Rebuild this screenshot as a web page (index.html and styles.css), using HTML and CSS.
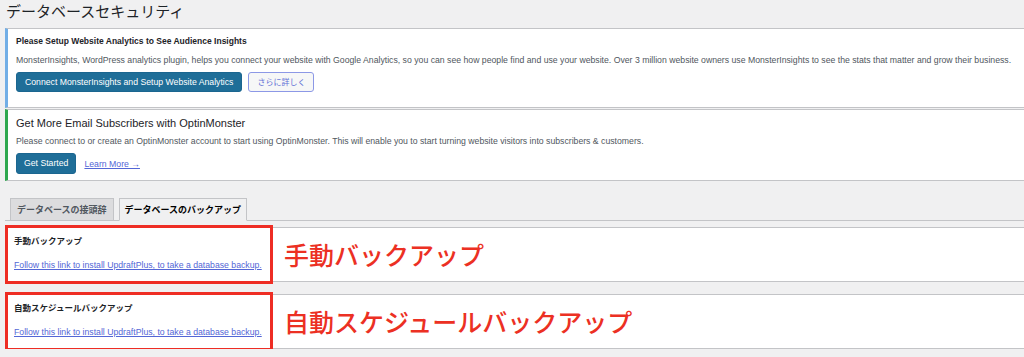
FILE: index.html
```html
<!DOCTYPE html>
<html>
<head lang="ja">
    <meta charset="UTF-8">
    <title>データベースセキュリティ</title>
    <link rel="stylesheet" href="styles.css">
</head>
<body>
<div class="wrap">
    <h1 class="page-title">データベースセキュリティ</h1>

    <div class="notice notice-info">
        <p class="notice-title">Please Setup Website Analytics to See Audience Insights</p>
        <p class="notice-text">MonsterInsights, WordPress analytics plugin, helps you connect your website with Google Analytics, so you can see how people find and use your website. Over 3 million website owners use MonsterInsights to see the stats that matter and grow their business.</p>
        <div class="notice-actions">
            <a class="btn btn-primary" href="#">Connect MonsterInsights and Setup Website Analytics</a>
            <a class="btn btn-secondary" href="#">さらに詳しく</a>
        </div>
    </div>

    <div class="notice notice-success">
        <p class="notice-heading">Get More Email Subscribers with OptinMonster</p>
        <p class="notice-text">Please connect to or create an OptinMonster account to start using OptinMonster. This will enable you to start turning website visitors into subscribers &amp; customers.</p>
        <div class="notice-actions">
            <a class="btn btn-primary btn-tall" href="#">Get Started</a>
            <a class="learn-more" href="#">Learn More →</a>
        </div>
    </div>

    <div class="tabs">
        <a class="tab" href="#">データベースの接頭辞</a>
        <a class="tab tab-active" href="#">データベースのバックアップ</a>
    </div>

    <div class="card">
        <div class="mark">
            <p class="card-title">手動バックアップ</p>
            <a class="card-link" href="#">Follow this link to install UpdraftPlus, to take a database backup.</a>
        </div>
        <span class="label">手動バックアップ</span>
    </div>

    <div class="card">
        <div class="mark">
            <p class="card-title">自動スケジュールバックアップ</p>
            <a class="card-link" href="#">Follow this link to install UpdraftPlus, to take a database backup.</a>
        </div>
        <span class="label">自動スケジュールバックアップ</span>
    </div>
</div>
</body>
</html>
```

FILE: styles.css
```css
* {
    margin: 0;
    padding: 0;
    box-sizing: border-box;
}

body {
    background-color: #f0f0f1;
    font-family: "Liberation Sans", "Noto Sans CJK JP", sans-serif;
    color: #1d2327;
    overflow: hidden;
}

.wrap {
    padding-left: 5px;
    margin-right: -4px;
}

.page-title {
    font-family: "Noto Sans CJK JP", sans-serif;
    font-size: 15px;
    font-weight: 400;
    line-height: 20px;
    padding: 1px 0 0 1px;
    margin-bottom: 7px;
    color: #1d2327;
}

.notice {
    background-color: #fff;
    border: 1px solid #c3c4c7;
    border-left-width: 3px;
    padding-left: 8px;
}

.notice-info {
    border-left-color: #72aee6;
    padding-top: 6px;
    padding-bottom: 15px;
}

.notice-success {
    border-left-color: #2fa84f;
    margin-top: 1px;
    padding-top: 6px;
    padding-bottom: 6px;
}

.notice-title {
    font-size: 8.5px;
    font-weight: 700;
    line-height: 12px;
}

.notice-heading {
    font-size: 11px;
    line-height: 14px;
}

.notice-text {
    font-size: 8.7px;
    line-height: 12px;
    color: #50575e;
    margin-top: 7px;
}

.notice-success .notice-text {
    margin-top: 5px;
}

.notice-actions {
    display: flex;
    align-items: center;
    gap: 6px;
    margin-top: 6px;
}

.btn {
    display: block;
    height: 20px;
    line-height: 18px;
    padding: 0 8px;
    font-size: 8.7px;
    border-radius: 3px;
    text-decoration: none;
    border: 1px solid;
}

.btn-primary {
    background-color: #1f6e98;
    border-color: #1b6690;
    color: #fff;
}

.btn-tall {
    height: 21px;
    line-height: 19px;
    padding: 0 7px;
}

.btn-secondary {
    font-family: "Noto Sans CJK JP", sans-serif;
    font-size: 8px;
    background-color: #f6f7f7;
    border-color: #8c98e6;
    color: #6271d6;
}

.learn-more {
    font-size: 8.7px;
    color: #5366d6;
    margin-left: 2px;
}

.tabs {
    display: flex;
    gap: 5px;
    margin-top: 17px;
    padding-left: 5px;
    border-bottom: 1px solid #c3c4c7;
}

.tab {
    font-family: "Noto Sans CJK JP", sans-serif;
    font-size: 9px;
    font-weight: 700;
    line-height: 21px;
    padding: 0 6px;
    border: 1px solid #c3c4c7;
    margin-bottom: -1px;
    background-color: #dcdcde;
    color: #50575e;
    text-decoration: none;
}

.tab-active {
    background-color: #f0f0f1;
    border-bottom-color: #f0f0f1;
    color: #000;
    padding: 0 5px;
}

.card {
    display: flex;
    align-items: center;
    background-color: #fff;
    border: 1px solid #c3c4c7;
    margin-top: 6px;
}

.card + .card {
    margin-top: 12px;
}

.mark {
    align-self: stretch;
    width: 268px;
    margin: -3px 0 -3px -1px;
    border: 3px solid #ee2d24;
    padding: 6px 0 10px 6px;
}

.card-title {
    font-family: "Noto Sans CJK JP", sans-serif;
    font-size: 8.5px;
    font-weight: 700;
    line-height: 12px;
}

.card-link {
    display: block;
    margin-top: 13px;
    font-size: 8.7px;
    line-height: 12px;
    color: #5366d6;
}

.label {
    margin-left: 11px;
    font-family: "Noto Sans CJK JP", sans-serif;
    font-size: 25px;
    font-weight: 500;
    line-height: 1;
    color: #ec3023;
}
```
